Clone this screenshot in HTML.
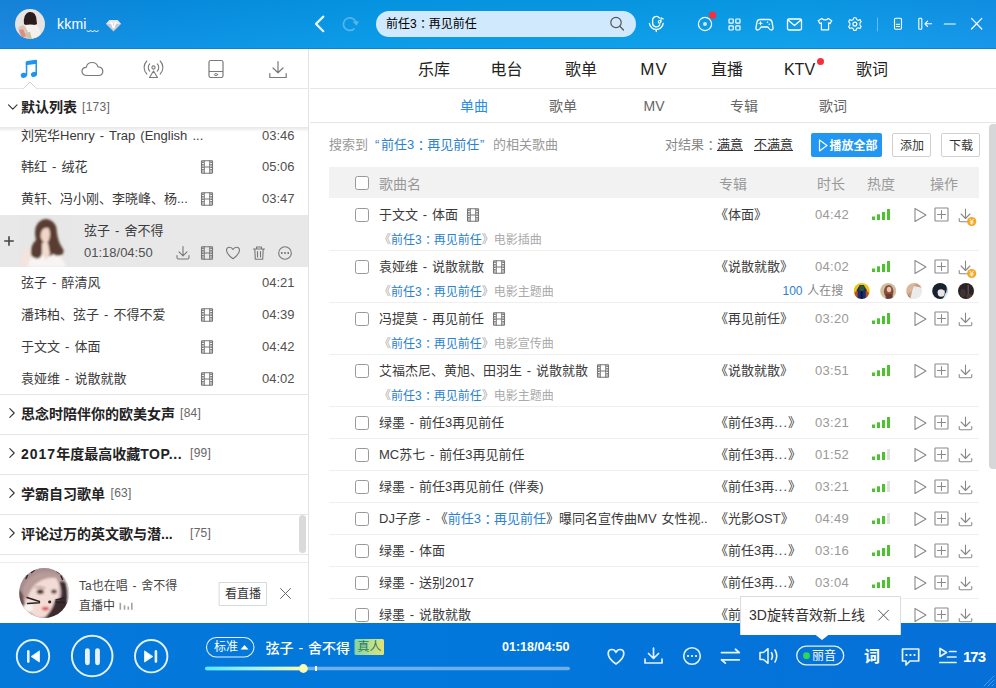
<!DOCTYPE html>
<html lang="zh-CN">
<head>
<meta charset="utf-8">
<title>酷狗音乐</title>
<style>
*{box-sizing:border-box;margin:0;padding:0}
html,body{width:996px;height:688px;overflow:hidden;background:#fff}
body{font-family:"Liberation Sans","Noto Sans CJK SC",sans-serif;font-size:13px;color:#333;position:relative}
.abs{position:absolute}
.t{position:absolute;white-space:nowrap;line-height:20px;height:20px}
svg{position:absolute;overflow:visible}
#top{left:0;top:0;width:996px;height:49px;background:linear-gradient(180deg,rgba(0,0,40,.05),rgba(255,255,255,.03)),linear-gradient(90deg,#1787e0 0%,#0890e4 16%,#059ae8 38%,#0a9eea 80%,#1194ea 100%);border-bottom:1px solid #1a80c8}
#left{left:0;top:49px;width:309px;height:575px;background:#fff;border-right:1px solid #e3e3e3}
#right{left:310px;top:49px;width:686px;height:575px;background:#fff;overflow:hidden}
.hl{position:absolute;height:1px;background:#e6e6e6}
.ls{font-size:13px;color:#3a3a3a;word-spacing:1.500px}
.ld{font-size:13px;color:#505050}
.gh{font-size:14px;font-weight:bold;color:#222}
.gc{font-size:12px;color:#666;letter-spacing:.3px}
.nav{font-size:16px;color:#222;transform:translateX(-50%)}
.sub{font-size:14px;color:#666;transform:translateX(-50%)}
.cb{position:absolute;width:14px;height:14px;border:1px solid #999;border-radius:2.500px;background:#fff}
.sn{font-size:13px;color:#3a3a3a;word-spacing:1.200px}
.al{font-size:13px;color:#3a3a3a}
.al i{font-style:normal;letter-spacing:1px}
.du{font-size:13px;color:#999;letter-spacing:.3px}
.s2{font-size:12px;color:#aaa}
.s2 b{font-weight:normal;color:#2a82d0}
.bl{color:#2a82d0}
.fc{position:relative;left:.27em}
</style>
</head>
<body>
<div id="top" class="abs"></div>
<div id="left" class="abs"></div>
<div id="right" class="abs"></div>
<!--TOP-->
<svg style="left:0;top:0" width="996" height="49" viewBox="0 0 996 49" fill="none" stroke="#fff" stroke-width="1.3" stroke-linecap="round" stroke-linejoin="round">
 <defs><clipPath id="avc"><circle cx="30" cy="24" r="15"/></clipPath><filter id="bl0" x="-10%" y="-10%" width="120%" height="120%"><feGaussianBlur stdDeviation=".6"/></filter></defs>
 <g stroke="none" clip-path="url(#avc)">
  <rect x="14" y="8" width="32" height="32" fill="#e7e3e3"/>
  <g filter="url(#bl0)">
  <path d="M24 24 Q23 14 29 12 Q36 11 36.500 20 L37 24 Q34 26 30 25 Q26 26 24 24Z" fill="#2b1c1d"/>
  <path d="M20 40 Q20 28 25 25 Q30 24 36 25 Q41 28 41 40Z" fill="#f3f0ee"/>
  <path d="M18 28 Q21 24 25 26 L32 40 L21 40Z" fill="#e2c4b6"/>
  <path d="M19 30 L23 29 L26 36 L22 38Z" fill="#d58f86"/>
  <path d="M26 33 L30 32 L32 39 L28 40Z" fill="#c9c49a"/>
  </g>
 </g>
 <!-- vip diamond -->
 <g stroke="none" transform="translate(0 1)">
  <path d="M109.500 19 L117.500 19 L121 23 L113.500 30.500 L106 23Z" fill="#c9ccd1"/>
  <path d="M109.500 19 L117.500 19 L121 23 L106 23Z" fill="#e4e6ea"/>
  <path d="M110.300 21 L112.300 21 L113.600 25 L114.900 21 L116.700 21 L114.300 27.500 L112.800 27.500Z" fill="#fff"/>
 </g>
 <!-- back -->
 <path d="M323.300 16.600 L316 23.900 L323.300 31.200" stroke-width="2.200" stroke="#e2f2fd"/>
 <!-- refresh (dim) -->
 <g opacity=".3"><path d="M355.96 22.79 A6.3 6.3 0 1 0 354.02 28.78" stroke-width="1.700"/><path d="M352.66 21.59 L359.06 21.19 L356.56 25.69Z" fill="#fff" stroke="none"/></g>
 <!-- search box -->
 <rect x="376" y="11" width="260" height="26" rx="13" fill="#d0e9fc" stroke="none"/>
 <g stroke="#555" stroke-width="1.200"><circle cx="616" cy="22.500" r="5.200"/><path d="M620 26.500 L623.500 30"/></g>
 <!-- mic -->
 <g stroke-width="1.300"><path d="M659.300 18 A3.700 3.700 0 0 0 652.600 20 L652.600 23 A3.800 3.800 0 0 0 659.800 24.800"/><path d="M649.400 23.300 A6.950 6.950 0 0 0 663.200 23.300"/><path d="M656.300 30.300 L656.300 31.500"/><circle cx="659.600" cy="21.800" r="1.300" stroke-width="1.100"/><path d="M661 21.500 L661 17.800 L663.300 19" stroke-width="1.100"/></g>
 <!-- disc -->
 <circle cx="705" cy="24" r="6.600" stroke-width="1.200"/><circle cx="705" cy="24" r="2" fill="#cfe8fb" stroke="none"/>
 <circle cx="712.700" cy="15.200" r="3.600" fill="#f5303a" stroke="none"/>
 <!-- grid -->
 <g stroke-width="1.200"><rect x="729" y="19" width="4.200" height="4.200" rx=".8"/><rect x="735.800" y="19" width="4.200" height="4.200" rx=".8"/><rect x="729" y="25.800" width="4.200" height="4.200" rx=".8"/><rect x="735.800" y="25.800" width="4.200" height="4.200" rx=".8"/></g>
 <!-- gamepad -->
 <path d="M760 19.500 L769 19.500 Q771.500 19.500 772 22 L773 27.500 Q773.300 30 771.300 30 Q770 30 769 28.500 L768 27 L761 27 L760 28.500 Q759 30 757.700 30 Q755.700 30 756 27.500 L757 22 Q757.500 19.500 760 19.500Z"/>
 <path d="M760.500 21.800 L760.500 24.800 M759 23.300 L762 23.300" stroke-width="1.100"/><circle cx="767.500" cy="22.300" r=".8" fill="#fff" stroke="none"/><circle cx="769.300" cy="24.200" r=".8" fill="#fff" stroke="none"/>
 <!-- mail -->
 <rect x="787.500" y="19" width="14" height="11" rx="1.500"/><path d="M788 20 L794.500 25.500 L801 20"/>
 <!-- shirt -->
 <path d="M821.800 18.500 Q825 21.300 828.200 18.500 L831.800 20.800 L830 23.600 L828.600 22.800 L828.600 29.800 L821.400 29.800 L821.400 22.800 L820 23.600 L818.200 20.800Z" stroke-width="1.200"/>
 <!-- gear -->
 <g transform="translate(854.900 24.100) scale(.9)"><circle r="2.200"/><path d="M-1.300 -7 L1.300 -7 L1.900 -5 L3.800 -4.100 L5.700 -5 L7 -2.700 L5.600 -1.200 L5.600 1.200 L7 2.700 L5.700 5 L3.800 4.100 L1.900 5 L1.300 7 L-1.300 7 L-1.900 5 L-3.800 4.100 L-5.700 5 L-7 2.700 L-5.600 1.200 L-5.600 -1.200 L-7 -2.700 L-5.700 -5 L-3.800 -4.100 L-1.900 -5Z" stroke-width="1.200"/></g>
 <!-- separator -->
 <path d="M877.500 18 L877.500 31" stroke="#6cb8f3" stroke-width="1"/>
 <!-- phone -->
 <rect x="894.500" y="18.300" width="7" height="11" rx="1.200" stroke-width="1.100"/><path d="M896.300 24.300 L899.700 24.300 M896.300 26.500 L899.700 26.500" stroke-width="1"/>
 <!-- collapse -->
 <rect x="918.800" y="18.300" width="3" height="11" rx=".8" stroke-width="1.100"/><path d="M925 23.800 L931.600 23.800 M927.600 21.100 L924.900 23.800 L927.600 26.500" stroke-width="1.100"/>
 <!-- minimize -->
 <path d="M944.300 24 L955.300 24" stroke-width="1.200"/>
 <!-- close -->
 <path d="M971.500 18.400 L981.800 29 M981.800 18.400 L971.500 29" stroke-width="1.200"/>
</svg>
<div class="t" style="left:57px;top:14px;font-size:14px;color:#fff;letter-spacing:.2px">kkmi<span style="font-size:12px;letter-spacing:0;position:relative;top:2px">﹏</span></div>
<div class="t" style="left:386px;top:14px;font-size:12px;color:#000">前任3<span class="fc">：</span>再见前任</div>
<!--LEFT-->
<div class="hl" style="left:0;top:88px;width:309px"></div>
<svg style="left:0;top:48px" width="309" height="575" viewBox="0 48 309 575" fill="none" stroke="#7a7a7a" stroke-width="1.200" stroke-linecap="round" stroke-linejoin="round">
 <!-- caret under active tab -->
 <path d="M23.500 88.500 L30 82 L36.500 88.500" stroke="#cfcfcf" stroke-width="1" fill="#fff"/>
 <path d="M24.500 88.500 L35.500 88.500" stroke="#fff" stroke-width="1.500"/>
 <!-- music note -->
 <g stroke="none" fill="#1f95ef">
  <path d="M25.800 62.300 Q25.800 61.100 27 60.900 L35.600 59.700 Q37 59.500 37 60.900 L37 63.700 L27.300 65.100 L25.800 65.100Z"/>
  <rect x="25.800" y="62" width="1.500" height="13.500"/><rect x="35.500" y="60.500" width="1.500" height="14"/>
  <ellipse cx="23.800" cy="75.300" rx="3.100" ry="2.550" transform="rotate(-15 23.800 75.300)"/>
  <ellipse cx="34" cy="74.400" rx="3.100" ry="2.550" transform="rotate(-15 34 74.400)"/>
 </g>
 <!-- cloud -->
 <path d="M87 75.500 Q82 75.500 82 71.300 Q82 67.500 86.200 67.300 Q87.300 62.500 92.200 62.500 Q96.800 62.500 98 66.800 Q102.800 67 102.800 71.300 Q102.800 75.500 98.500 75.500Z"/>
 <!-- tower -->
 <g stroke-width="1.100"><circle cx="153.500" cy="67.500" r="1.600"/><path d="M153.500 71 L149.500 77.500 L157.500 77.500Z"/>
 <path d="M149.800 63.800 A5.200 5.200 0 0 0 149.800 71.200"/><path d="M157.200 63.800 A5.200 5.200 0 0 1 157.200 71.200"/>
 <path d="M146.800 61 A9.200 9.200 0 0 0 146.800 74"/><path d="M160.200 61 A9.200 9.200 0 0 1 160.200 74"/></g>
 <!-- device -->
 <rect x="209" y="60.500" width="14" height="17" rx="1.800"/><path d="M209.500 71.500 L222.500 71.500"/><ellipse cx="216" cy="74.600" rx="1.700" ry="1" stroke-width="1"/>
 <!-- download -->
 <path d="M278 61.500 L278 72.500 M273 68 L278 72.800 L283 68 M269.800 73.500 L269.800 77.500 L286.200 77.500 L286.200 73.500"/>
 <!-- chevron open -->
 <path d="M8.500 104.800 L12.800 109.200 L17 104.800" stroke="#333" stroke-width="1.100"/>
</svg>
<div class="t" style="left:21px;top:97px;font-size:14px;font-weight:bold;color:#222">默认列表</div>
<div class="t gc" style="left:82px;top:97px">[173]</div>
<div class="abs" style="left:0;top:127px;width:308px;height:5px;background:linear-gradient(180deg,rgba(0,0,0,.10),rgba(0,0,0,0))"></div>
<!-- songs -->
<div class="t ls" style="left:21px;top:126px">刘宪华Henry - Trap (English ...</div><div class="t ld" style="left:262px;top:126px">03:46</div>
<div class="t ls" style="left:21px;top:157px">韩红 - 绒花</div><div class="t ld" style="left:262px;top:157px">05:06</div>
<div class="t ls" style="left:21px;top:189px">黄轩、冯小刚、李晓峰、杨...</div><div class="t ld" style="left:262px;top:189px">03:47</div>
<div class="abs" style="left:0;top:215px;width:308px;height:52px;background:#e8e8e8"></div>
<div class="t ls" style="left:84px;top:221px">弦子 - 舍不得</div>
<div class="t ld" style="left:84px;top:243px">01:18/04:50</div>
<div class="t ls" style="left:21px;top:273px">弦子 - 醉清风</div><div class="t ld" style="left:262px;top:273px">04:21</div>
<div class="t ls" style="left:21px;top:305px">潘玮柏、弦子 - 不得不爱</div><div class="t ld" style="left:262px;top:305px">04:39</div>
<div class="t ls" style="left:21px;top:337px">于文文 - 体面</div><div class="t ld" style="left:262px;top:337px">04:42</div>
<div class="t ls" style="left:21px;top:369px">袁娅维 - 说散就散</div><div class="t ld" style="left:262px;top:369px">04:02</div>
<!-- groups -->
<div class="hl" style="left:0;top:394px;width:308px"></div>
<div class="t gh" style="left:21px;top:404px">思念时陪伴你的欧美女声</div><div class="t gc" style="left:180px;top:403px">[84]</div>
<div class="hl" style="left:0;top:434px;width:308px"></div>
<div class="t gh" style="left:21px;top:444px"><span style="letter-spacing:1px">2017</span>年度最高收藏<span style="letter-spacing:.6px">TOP...</span></div><div class="t gc" style="left:190px;top:443px">[99]</div>
<div class="hl" style="left:0;top:474px;width:308px"></div>
<div class="t gh" style="left:21px;top:484px">学霸自习歌单</div><div class="t gc" style="left:110.500px;top:483px">[63]</div>
<div class="hl" style="left:0;top:514px;width:308px"></div>
<div class="t gh" style="left:21px;top:524px">评论过万的英文歌与潜...</div><div class="t gc" style="left:190px;top:523px">[75]</div>
<div class="hl" style="left:0;top:554px;width:308px"></div>
<div class="hl" style="left:0;top:562px;width:308px;background:#ececec"></div>
<div class="abs" style="left:299px;top:515px;width:7px;height:38px;border-radius:4px;background:#dadada"></div>
<svg style="left:0;top:120px" width="309" height="503" viewBox="0 120 309 503" fill="none" stroke="#777" stroke-width="1.100" stroke-linecap="round" stroke-linejoin="round">
 <defs>
  <g id="film"><rect x="-5.500" y="-6.300" width="11" height="12.600" rx=".5"/><path d="M-2.700 -6.300 L-2.700 6.300 M2.700 -6.300 L2.700 6.300 M-2.700 0 L2.700 0" stroke-width="1"/><path d="M-4.100 -5.600 L-4.100 5.600 M4.100 -5.600 L4.100 5.600" stroke-width="1.700" stroke-dasharray="1.500 1.050" stroke-linecap="butt"/></g>
  <path id="chev" d="M-2.200 -4.300 L2.200 0 L-2.200 4.300" stroke="#333" stroke-width="1.100"/>
 </defs>
 <use href="#film" x="207" y="167"/><use href="#film" x="207" y="199"/><use href="#film" x="207" y="253"/>
 <use href="#film" x="207" y="315"/><use href="#film" x="207" y="347"/><use href="#film" x="207" y="379"/>
 <use href="#chev" x="12" y="413"/><use href="#chev" x="12" y="453"/><use href="#chev" x="12" y="493"/><use href="#chev" x="12" y="533"/>
 <!-- playing row art -->
 <defs><filter id="bl2" x="-10%" y="-10%" width="120%" height="120%"><feGaussianBlur stdDeviation=".8"/></filter><clipPath id="artc"><rect x="19" y="215" width="52" height="52"/></clipPath></defs>
 <g stroke="none" clip-path="url(#artc)">
  <rect x="19" y="215" width="52" height="52" fill="#e6e7e6"/>
  <g filter="url(#bl2)">
  <path d="M21 267 Q20 255 24 250 Q27 246 30 249 L33 267Z" fill="#f3e4dc"/>
  <path d="M28 267 Q29 256 36 253 L54 253 Q63 256 66 267Z" fill="#f7f4f3"/>
  <path d="M36 240 Q33 228 39 222 Q44 217 50 220 Q57 223 57 233 Q58 242 63 249 Q65 253 61 255 Q56 257 53 254 Q50 258 46 254 L42 254 Q40 260 35 258 Q30 257 31 251 Q31 245 36 240Z" fill="#5a3c30"/>
  <path d="M40 233 Q40 226 45 226 Q50 227 50 234 Q50 241 46 244 Q41 242 40 233Z" fill="#f1d5c6"/>
  <path d="M42 243 L48 243 L50 254 L42 254Z" fill="#f3dccf"/>
  <path d="M39 234 Q39 225 45 224.500 Q48 224.500 50 228 Q46 227 43 229 Q41 231 40.500 236Z" fill="#5a3c30"/>
  <path d="M43 254 L46 260 L50 254Z" fill="#efd8cc"/>
  </g>
 </g>
 <path d="M4.200 241 L13.800 241 M9 236.200 L9 245.800" stroke="#444" stroke-width="1.600" stroke-linecap="butt"/>
 <!-- playing row icons -->
 <path d="M183 246.500 L183 255.500 M179 251.800 L183 255.800 L187 251.800 M177 255.500 L177 257.500 Q177 259 178.500 259 L187.500 259 Q189 259 189 257.500 L189 255.500"/>
 <path d="M233 258.800 Q226.500 254 226.500 250.300 Q226.500 247.200 229.500 247.200 Q231.800 247.200 233 249.500 Q234.200 247.200 236.500 247.200 Q239.500 247.200 239.500 250.300 Q239.500 254 233 258.800Z"/>
 <path d="M253.500 249 L264.500 249 M256.500 249 L256.500 247 L261.500 247 L261.500 249 M254.800 249 L255.300 259.300 L262.700 259.300 L263.200 249 M257.500 251.500 L257.500 257 M260.500 251.500 L260.500 257"/>
 <circle cx="285" cy="253" r="6.300"/><g fill="#666" stroke="none"><circle cx="281.800" cy="253" r=".9"/><circle cx="285" cy="253" r=".9"/><circle cx="288.200" cy="253" r=".9"/></g>
 <!-- promo -->
 <defs><clipPath id="avp"><circle cx="44.200" cy="593" r="25"/></clipPath><filter id="bl3" x="-10%" y="-10%" width="120%" height="120%"><feGaussianBlur stdDeviation="1"/></filter><filter id="bl4" x="-10%" y="-10%" width="120%" height="120%"><feGaussianBlur stdDeviation=".5"/></filter></defs>
 <g stroke="none" clip-path="url(#avp)">
  <rect x="18" y="567" width="53" height="53" fill="#b49a98"/>
  <g filter="url(#bl3)">
  <path d="M18 567 L71 567 L71 584 Q58 570 44 572 Q30 572 22 592 L18 600Z" fill="#a78e8f"/>
  <path d="M24 600 Q22 582 34 577 Q44 572 56 578 Q61 584 59 598 Q56 612 46 617 Q36 620 30 612 Q25 607 24 600Z" fill="#f4dcd6"/>
  <path d="M22 596 Q24 578 38 574 Q48 572 58 578 Q50 577 42 580 Q30 586 27 600Z" fill="#b89c9a"/>
  <path d="M59 582 Q63 590 61 598 L55 600 Q52 612 42 620 L71 620 L71 582Z" fill="#3b2a2e"/>
  <path d="M64.500 578 Q69 588 67.500 603 L72 603 L72 578Z" fill="#f6f3f2"/>
  <path d="M18 590 Q22 590 24 598 Q25 606 29 612 L18 616Z" fill="#6b4f4f"/>
  <ellipse cx="28" cy="608" rx="5" ry="4.500" fill="#f8f4f2"/>
  <ellipse cx="40.300" cy="591.800" rx="3.600" ry="2.500" fill="#4a3436"/><ellipse cx="54" cy="591.500" rx="2.800" ry="2.100" fill="#4a3436"/>
  <path d="M35 587.500 Q40 585.500 45 588" stroke="#8a6a66" stroke-width="1" fill="none"/>
  <ellipse cx="45.400" cy="608.600" rx="3.600" ry="1.900" fill="#e2434f"/>
  </g>
  <g filter="url(#bl4)">
  <ellipse cx="49.700" cy="602" rx="1.600" ry="1.400" fill="#2d2024"/>
  <path d="M27 597.500 L39.500 601.500 M27.500 603.500 L39.500 602.800 M56 600 L64 598 M56 602 L64.500 602.500" stroke="#2b2023" stroke-width="1.400" fill="none"/>
  <path d="M31.500 572.500 L34.500 570 M26 578.500 L27.500 575.500 M57 571.500 L60 573.500 M61 576 L62.500 579.500" stroke="#2b2023" stroke-width="1.400" fill="none"/>
  </g>
 </g>
 <rect x="219.500" y="582.500" width="47" height="23" fill="#fff" stroke="#d9d9d9" stroke-width="1"/>
 <path d="M280.500 588.500 L290.500 598.500 M290.500 588.500 L280.500 598.500" stroke="#666" stroke-width="1"/>
 <g stroke="#a2a2a2" stroke-width="1.600" stroke-linecap="butt"><path d="M120.300 602.800 L120.300 609.800 M124.500 605.300 L124.500 609.800 M128.300 606.600 L128.300 609.800 M131.800 602.800 L131.800 609.800"/></g>
</svg>
<div class="t" style="left:79px;top:576px;font-size:12px;color:#444;word-spacing:1.500px">Ta也在唱 - 舍不得</div>
<div class="t" style="left:79px;top:596px;font-size:12px;color:#444">直播中</div>
<div class="t" style="left:225px;top:584px;font-size:12px;color:#333">看直播</div>
<!--RIGHT-->
<div class="t nav" style="left:434px;top:60px">乐库</div>
<div class="t nav" style="left:506.5px;top:60px">电台</div>
<div class="t nav" style="left:581px;top:60px">歌单</div>
<div class="t nav" style="left:653.5px;top:60px"><span style="letter-spacing:1px;font-size:17px;margin-right:-1px">MV</span></div>
<div class="t nav" style="left:727px;top:60px">直播</div>
<div class="t nav" style="left:799.5px;top:60px">KTV</div>
<div class="t nav" style="left:872px;top:60px">歌词</div>
<div class="abs" style="left:817.200px;top:57.500px;width:7px;height:7px;border-radius:3.500px;background:#f5303a"></div>
<div class="hl" style="left:310px;top:88px;width:686px"></div>
<div class="t sub" style="left:474px;top:96px;color:#2a8de4">单曲</div>
<div class="t sub" style="left:563px;top:96px">歌单</div>
<div class="t sub" style="left:654px;top:96px">MV</div>
<div class="t sub" style="left:744px;top:96px">专辑</div>
<div class="t sub" style="left:833px;top:96px">歌词</div>
<div class="hl" style="left:310px;top:122px;width:686px"></div>
<div class="abs" style="left:989px;top:124px;width:7px;height:345px;border-radius:4px 0 0 4px;background:#d6d7d9"></div>
<div class="t" style="left:329px;top:135px;font-size:13px;color:#999">搜索到</div>
<div class="t bl" style="left:375px;top:135px;font-size:13px">“</div>
<div class="t bl" style="left:381px;top:135px;font-size:13px">前任3<span class="fc">：</span>再见前任</div>
<div class="t bl" style="left:480px;top:135px;font-size:13px">”</div>
<div class="t" style="left:493px;top:135px;font-size:13px;color:#999">的相关歌曲</div>
<div class="t" style="left:665px;top:135px;font-size:13px;color:#888">对结果<span class="fc">：</span></div>
<div class="t" style="left:717px;top:135px;font-size:13px;color:#333;text-decoration:underline">满意</div>
<div class="t" style="left:754px;top:135px;font-size:13px;color:#333;text-decoration:underline">不满意</div>
<div class="abs" style="left:811px;top:133px;width:71px;height:24px;background:#2196f3;border-radius:2px"></div>
<div class="t" style="left:829.500px;top:135.500px;font-size:12px;color:#fff;font-weight:bold">播放全部</div>
<div class="abs" style="left:892px;top:133px;width:39px;height:24px;border:1px solid #d0d0d0;border-radius:2px;background:#fff"></div>
<div class="t" style="left:900px;top:135.500px;font-size:12px;color:#333">添加</div>
<div class="abs" style="left:941px;top:133px;width:39px;height:24px;border:1px solid #d0d0d0;border-radius:2px;background:#fff"></div>
<div class="t" style="left:949px;top:135.500px;font-size:12px;color:#333">下载</div>
<div class="abs" style="left:329px;top:167px;width:650px;height:31px;background:#f2f2f2"></div>
<div class="cb" style="left:355px;top:176px"></div>
<div class="t" style="left:379px;top:174px;font-size:14px;color:#999">歌曲名</div>
<div class="t" style="left:719px;top:174px;font-size:14px;color:#999">专辑</div>
<div class="t" style="left:817px;top:174px;font-size:14px;color:#999">时长</div>
<div class="t" style="left:867px;top:174px;font-size:14px;color:#999">热度</div>
<div class="t" style="left:930px;top:174px;font-size:14px;color:#999">操作</div>
<div class="cb" style="left:355px;top:208px"></div>
<div class="t sn" style="left:379px;top:205px" id="n0">于文文 - 体面</div>
<div class="t s2" style="left:379px;top:230px">《<b>前任3<span class="fc">：</span>再见前任</b>》电影插曲</div>
<div class="hl" style="left:329px;top:250px;width:650px;background:#efefef"></div>
<div class="t al" style="left:715px;top:205px">《体面》</div>
<div class="t du" style="left:815px;top:205px">04:42</div>
<div class="cb" style="left:355px;top:260px"></div>
<div class="t sn" style="left:379px;top:257px" id="n1">袁娅维 - 说散就散</div>
<div class="t s2" style="left:379px;top:282px">《<b>前任3<span class="fc">：</span>再见前任</b>》电影主题曲</div>
<div class="hl" style="left:329px;top:302px;width:650px;background:#efefef"></div>
<div class="t al" style="left:715px;top:257px">《说散就散》</div>
<div class="t du" style="left:815px;top:257px">04:02</div>
<div class="cb" style="left:355px;top:312px"></div>
<div class="t sn" style="left:379px;top:309px" id="n2">冯提莫 - 再见前任</div>
<div class="t s2" style="left:379px;top:334px">《<b>前任3<span class="fc">：</span>再见前任</b>》电影宣传曲</div>
<div class="hl" style="left:329px;top:354px;width:650px;background:#efefef"></div>
<div class="t al" style="left:715px;top:309px">《再见前任》</div>
<div class="t du" style="left:815px;top:309px">03:20</div>
<div class="cb" style="left:355px;top:364px"></div>
<div class="t sn" style="left:379px;top:361px" id="n3">艾福杰尼、黄旭、田羽生 - 说散就散</div>
<div class="t s2" style="left:379px;top:386px">《<b>前任3<span class="fc">：</span>再见前任</b>》电影主题曲</div>
<div class="hl" style="left:329px;top:406px;width:650px;background:#efefef"></div>
<div class="t al" style="left:715px;top:361px">《说散就散》</div>
<div class="t du" style="left:815px;top:361px">03:51</div>
<div class="cb" style="left:355px;top:416px"></div>
<div class="t sn" style="left:379px;top:413px" id="n4">绿墨 - 前任3再见前任</div>
<div class="hl" style="left:329px;top:438px;width:650px;background:#efefef"></div>
<div class="t al" style="left:715px;top:413px">《前任3再<i>...</i>》</div>
<div class="t du" style="left:815px;top:413px">03:21</div>
<div class="cb" style="left:355px;top:448px"></div>
<div class="t sn" style="left:379px;top:445px" id="n5">MC苏七 - 前任3再见前任</div>
<div class="hl" style="left:329px;top:470px;width:650px;background:#efefef"></div>
<div class="t al" style="left:715px;top:445px">《前任3再<i>...</i>》</div>
<div class="t du" style="left:815px;top:445px">01:52</div>
<div class="cb" style="left:355px;top:480px"></div>
<div class="t sn" style="left:379px;top:477px" id="n6">绿墨 - 前任3再见前任 (伴奏)</div>
<div class="hl" style="left:329px;top:502px;width:650px;background:#efefef"></div>
<div class="t al" style="left:715px;top:477px">《前任3再<i>...</i>》</div>
<div class="t du" style="left:815px;top:477px">03:21</div>
<div class="cb" style="left:355px;top:512px"></div>
<div class="t sn" style="left:379px;top:509px" id="n7">DJ子彦 - 《<span class="bl">前任3<span class="fc">：</span>再见前任</span>》曝同名宣传曲MV 女性视..</div>
<div class="hl" style="left:329px;top:534px;width:650px;background:#efefef"></div>
<div class="t al" style="left:715px;top:509px">《光影OST》</div>
<div class="t du" style="left:815px;top:509px">04:49</div>
<div class="cb" style="left:355px;top:544px"></div>
<div class="t sn" style="left:379px;top:541px" id="n8">绿墨 - 体面</div>
<div class="hl" style="left:329px;top:566px;width:650px;background:#efefef"></div>
<div class="t al" style="left:715px;top:541px">《前任3再<i>...</i>》</div>
<div class="t du" style="left:815px;top:541px">03:16</div>
<div class="cb" style="left:355px;top:576px"></div>
<div class="t sn" style="left:379px;top:573px" id="n9">绿墨 - 送别2017</div>
<div class="hl" style="left:329px;top:598px;width:650px;background:#efefef"></div>
<div class="t al" style="left:715px;top:573px">《前任3再<i>...</i>》</div>
<div class="t du" style="left:815px;top:573px">03:04</div>
<div class="cb" style="left:355px;top:608px"></div>
<div class="t sn" style="left:379px;top:605px" id="n10">绿墨 - 说散就散</div>
<div class="hl" style="left:329px;top:630px;width:650px;background:#efefef"></div>
<div class="t al" style="left:715px;top:605px">《前任3再<i>...</i>》</div>
<div class="t du" style="left:815px;top:605px">03:19</div>
<svg style="left:310px;top:123px" width="686" height="500" viewBox="310 123 686 500" fill="none" stroke="#8a8a8a" stroke-width="1.100" stroke-linecap="round" stroke-linejoin="round">
<defs>
 <path id="rplay" d="M-5 -6.500 L6 0 L-5 6.500Z" stroke-width="1.100"/>
 <g id="radd"><rect x="-6.500" y="-6.500" width="13" height="13" rx=".5"/><path d="M-4 0 L4 0 M0 -4 L0 4"/></g>
 <path id="rdl" d="M0 -6 L0 3.300 M-4.400 -1 L0 3.500 L4.400 -1 M-6.300 3.500 L-6.300 5.500 Q-6.300 6.700 -5 6.700 L5 6.700 Q6.300 6.700 6.300 5.500 L6.300 3.500"/>
 <path id="rdl2" d="M0 -6 L0 2.500 M-3.300 -.8 L0 2.700 L3.300 -.8 M-5 2.500 L-5 5 L5 5 L5 2.500"/>
 <g id="film2" stroke="#777"><rect x="-5.500" y="-6.300" width="11" height="12.600" rx=".5"/><path d="M-2.700 -6.300 L-2.700 6.300 M2.700 -6.300 L2.700 6.300 M-2.700 0 L2.700 0" stroke-width="1"/><path d="M-4.100 -5.600 L-4.100 5.600 M4.100 -5.600 L4.100 5.600" stroke-width="1.700" stroke-dasharray="1.500 1.050" stroke-linecap="butt"/></g>
</defs>
<path d="M819.500 140 L819.500 151 L827 145.500Z" stroke="#fff" stroke-width="1.200"/>
<rect x="872" y="216.5" width="3" height="3.5" fill="#4cc22f" stroke="none"/>
<rect x="877" y="214.3" width="3" height="5.7" fill="#4cc22f" stroke="none"/>
<rect x="882" y="212.0" width="3" height="8" fill="#4cc22f" stroke="none"/>
<rect x="887" y="209.0" width="3" height="11" fill="#4cc22f" stroke="none"/>
<use href="#rplay" x="920" y="215"/><use href="#radd" x="941.500" y="214.5"/><use href="#rdl" x="965.500" y="215"/>
<circle cx="971.700" cy="221.5" r="4.600" fill="#f5a623" stroke="none"/><path d="M970 219.2 L971.700 221.5 L973.400 219.2 M971.700 221.5 L971.700 224.2 M970.200 221.8 L973.200 221.8 M970.200 223 L973.200 223" stroke="#fff" stroke-width=".8"/>
<rect x="872" y="268.5" width="3" height="3.5" fill="#4cc22f" stroke="none"/>
<rect x="877" y="266.3" width="3" height="5.7" fill="#4cc22f" stroke="none"/>
<rect x="882" y="264.0" width="3" height="8" fill="#4cc22f" stroke="none"/>
<rect x="887" y="261.0" width="3" height="11" fill="#4cc22f" stroke="none"/>
<use href="#rplay" x="920" y="267"/><use href="#radd" x="941.500" y="266.5"/><use href="#rdl" x="965.500" y="267"/>
<circle cx="971.700" cy="273.5" r="4.600" fill="#f5a623" stroke="none"/><path d="M970 271.2 L971.700 273.5 L973.400 271.2 M971.700 273.5 L971.700 276.2 M970.200 273.8 L973.200 273.8 M970.200 275 L973.200 275" stroke="#fff" stroke-width=".8"/>
<rect x="872" y="320.5" width="3" height="3.5" fill="#4cc22f" stroke="none"/>
<rect x="877" y="318.3" width="3" height="5.7" fill="#4cc22f" stroke="none"/>
<rect x="882" y="316.0" width="3" height="8" fill="#4cc22f" stroke="none"/>
<rect x="887" y="313.0" width="3" height="11" fill="#4cc22f" stroke="none"/>
<use href="#rplay" x="920" y="319"/><use href="#radd" x="941.500" y="318.5"/><use href="#rdl" x="965.500" y="319"/>
<rect x="872" y="372.5" width="3" height="3.5" fill="#4cc22f" stroke="none"/>
<rect x="877" y="370.3" width="3" height="5.7" fill="#4cc22f" stroke="none"/>
<rect x="882" y="368.0" width="3" height="8" fill="#4cc22f" stroke="none"/>
<rect x="887" y="365.0" width="3" height="11" fill="#4cc22f" stroke="none"/>
<use href="#rplay" x="920" y="371"/><use href="#radd" x="941.500" y="370.5"/><use href="#rdl" x="965.500" y="371"/>
<rect x="872" y="424.5" width="3" height="3.5" fill="#4cc22f" stroke="none"/>
<rect x="877" y="422.3" width="3" height="5.7" fill="#4cc22f" stroke="none"/>
<rect x="882" y="420.0" width="3" height="8" fill="#4cc22f" stroke="none"/>
<rect x="887" y="417.0" width="3" height="11" fill="#4cc22f" stroke="none"/>
<use href="#rplay" x="920" y="423"/><use href="#radd" x="941.500" y="422.5"/><use href="#rdl" x="965.500" y="423"/>
<rect x="872" y="456.5" width="3" height="3.5" fill="#4cc22f" stroke="none"/>
<rect x="877" y="454.3" width="3" height="5.7" fill="#4cc22f" stroke="none"/>
<rect x="882" y="452.0" width="3" height="8" fill="#4cc22f" stroke="none"/>
<rect x="887" y="449.0" width="3" height="11" fill="#e0e0e0" stroke="none"/>
<use href="#rplay" x="920" y="455"/><use href="#radd" x="941.500" y="454.5"/><use href="#rdl" x="965.500" y="455"/>
<rect x="872" y="488.5" width="3" height="3.5" fill="#4cc22f" stroke="none"/>
<rect x="877" y="486.3" width="3" height="5.7" fill="#4cc22f" stroke="none"/>
<rect x="882" y="484.0" width="3" height="8" fill="#4cc22f" stroke="none"/>
<rect x="887" y="481.0" width="3" height="11" fill="#e0e0e0" stroke="none"/>
<use href="#rplay" x="920" y="487"/><use href="#radd" x="941.500" y="486.5"/><use href="#rdl" x="965.500" y="487"/>
<rect x="872" y="520.5" width="3" height="3.5" fill="#4cc22f" stroke="none"/>
<rect x="877" y="518.3" width="3" height="5.7" fill="#4cc22f" stroke="none"/>
<rect x="882" y="516.0" width="3" height="8" fill="#4cc22f" stroke="none"/>
<rect x="887" y="513.0" width="3" height="11" fill="#e0e0e0" stroke="none"/>
<use href="#rplay" x="920" y="519"/><use href="#radd" x="941.500" y="518.5"/><use href="#rdl" x="965.500" y="519"/>
<rect x="872" y="552.5" width="3" height="3.5" fill="#4cc22f" stroke="none"/>
<rect x="877" y="550.3" width="3" height="5.7" fill="#4cc22f" stroke="none"/>
<rect x="882" y="548.0" width="3" height="8" fill="#4cc22f" stroke="none"/>
<rect x="887" y="545.0" width="3" height="11" fill="#4cc22f" stroke="none"/>
<use href="#rplay" x="920" y="551"/><use href="#radd" x="941.500" y="550.5"/><use href="#rdl" x="965.500" y="551"/>
<rect x="872" y="584.5" width="3" height="3.5" fill="#4cc22f" stroke="none"/>
<rect x="877" y="582.3" width="3" height="5.7" fill="#4cc22f" stroke="none"/>
<rect x="882" y="580.0" width="3" height="8" fill="#4cc22f" stroke="none"/>
<rect x="887" y="577.0" width="3" height="11" fill="#4cc22f" stroke="none"/>
<use href="#rplay" x="920" y="583"/><use href="#radd" x="941.500" y="582.5"/><use href="#rdl" x="965.500" y="583"/>
<rect x="872" y="616.5" width="3" height="3.5" fill="#4cc22f" stroke="none"/>
<rect x="877" y="614.3" width="3" height="5.7" fill="#4cc22f" stroke="none"/>
<rect x="882" y="612.0" width="3" height="8" fill="#4cc22f" stroke="none"/>
<rect x="887" y="609.0" width="3" height="11" fill="#4cc22f" stroke="none"/>
<use href="#rplay" x="920" y="615"/><use href="#radd" x="941.500" y="614.5"/><use href="#rdl" x="965.500" y="615"/>
<use href="#film2" x="473" y="215"/>
<use href="#film2" x="499" y="267"/>
<use href="#film2" x="499" y="319"/>
<use href="#film2" x="603" y="371"/>
<defs><filter id="bl1" x="-10%" y="-10%" width="120%" height="120%"><feGaussianBlur stdDeviation=".7"/></filter>
<clipPath id="ac0"><circle cx="861.7" cy="291" r="8"/></clipPath>
<clipPath id="ac1"><circle cx="888.2" cy="291" r="8"/></clipPath>
<clipPath id="ac2"><circle cx="914.2" cy="291" r="8"/></clipPath>
<clipPath id="ac3"><circle cx="940.2" cy="291" r="8"/></clipPath>
<clipPath id="ac4"><circle cx="966" cy="291" r="8"/></clipPath>
</defs>
<g clip-path="url(#ac0)" stroke="none"><g filter="url(#bl1)"><rect x="852.7" y="282" width="18" height="18" fill="#efc50a"/><path d="M855.7 300 L856.7 290 L859.7 285 L863.7 285 L866.7 290 L867.7 300Z" fill="#1f2f6a"/><ellipse cx="861.7" cy="288.500" rx="2.500" ry="3" fill="#2b5a3a"/><path d="M854.7 292 L857.7 291 L857.7 297 L854.7 298Z" fill="#c04a28"/><path d="M868.7 292 L865.7 291 L865.7 297 L868.7 298Z" fill="#c04a28"/><rect x="860.7" y="291" width="2" height="8" fill="#10183a"/></g></g>
<g clip-path="url(#ac1)" stroke="none"><g filter="url(#bl1)"><rect x="879.2" y="282" width="18" height="18" fill="#cdbf9f"/><ellipse cx="888.7" cy="291.500" rx="4.800" ry="6.500" fill="#8a4e3c"/><ellipse cx="889.0" cy="289.500" rx="2.200" ry="2.800" fill="#e8c4ae"/><path d="M885.2 300 L886.2 294 L892.2 294 L893.2 300Z" fill="#6a3a30"/></g></g>
<g clip-path="url(#ac2)" stroke="none"><g filter="url(#bl1)"><rect x="905.2" y="282" width="18" height="18" fill="#c9a083"/><path d="M910.2 300 L913.2 286 L923.2 288 L923.2 300Z" fill="#ecebeb"/><path d="M905.2 282 L916.2 282 L911.2 292 L905.2 294Z" fill="#d9b79c"/><path d="M906.2 300 L908.2 295 L912.2 300Z" fill="#8a6a55"/></g></g>
<g clip-path="url(#ac3)" stroke="none"><g filter="url(#bl1)"><rect x="931.2" y="282" width="18" height="18" fill="#b9cfe0"/><path d="M931.2 300 L932.2 288 Q936.2 281 943.2 283 Q948.2 285 946.2 292 L942.2 300Z" fill="#18222f"/><ellipse cx="941.2" cy="292.500" rx="3.600" ry="4.200" fill="#ece4e2"/><path d="M936.2 289 Q940.2 285 945.2 289 L944.2 290.500 Q940.2 288 937.2 291Z" fill="#18222f"/><path d="M945.2 294 L949.2 291 L949.2 300 L944.2 300Z" fill="#dfe6ee"/></g></g>
<g clip-path="url(#ac4)" stroke="none"><g filter="url(#bl1)"><rect x="957" y="282" width="18" height="18" fill="#2a2126"/><ellipse cx="963" cy="293" rx="3" ry="4" fill="#3f3234"/><rect x="967.5" y="285" width="1.600" height="11" fill="#5b4b48"/><ellipse cx="969" cy="296" rx="3" ry="2" fill="#4a3a36"/></g></g>
</svg>
<div class="t" style="left:782.500px;top:281px;font-size:12px;color:#888;word-spacing:1.500px"><span class="bl">100</span> 人在搜</div>
<!--BOTTOM-->
<div class="abs" style="left:0;top:623px;width:996px;height:65px;background:linear-gradient(90deg,#0479da 0%,#0277db 50%,#0670d8 100%);z-index:5"></div>
<div class="abs" style="left:740px;top:595.500px;width:160.500px;height:39.500px;background:#fff;border:1px solid #dcdcdc;border-bottom:none;z-index:6"></div>
<div class="t" style="left:749px;top:604.500px;font-size:14px;color:#333;z-index:7">3D旋转音效新上线</div>
<svg style="left:0;top:590px;z-index:7" width="996" height="98" viewBox="0 590 996 98" fill="none" stroke="#e6f2fd" stroke-width="1.600" stroke-linecap="round" stroke-linejoin="round">
 <defs><linearGradient id="pg" x1="0" x2="1" y1="0" y2="0"><stop offset="0" stop-color="#55eaff"/><stop offset=".55" stop-color="#a8f5e8"/><stop offset="1" stop-color="#fff8a8"/></linearGradient>
 <linearGradient id="zr" x1="0" x2="1" y1="0" y2="0"><stop offset="0" stop-color="#86d3a4"/><stop offset=".6" stop-color="#bfe08c"/><stop offset="1" stop-color="#e3e272"/></linearGradient></defs>
 <!-- tooltip arrow + close -->
 <path d="M815 634.500 L822 640 L829 634.500Z" fill="#fff" stroke="none"/>
 <path d="M878.500 610.200 L888.500 620.200 M888.500 610.200 L878.500 620.200" stroke="#555" stroke-width="1"/>
 <!-- prev -->
 <circle cx="33" cy="656.200" r="16.200" stroke-width="1.900" stroke="#e3f0fc"/>
 <path d="M39.300 651.200 L39.300 661.700 L31.600 656.500Z" fill="#fff" stroke-width="1.200"/><path d="M28.300 651.400 L28.300 661.600" stroke-width="2.600"/>
 <!-- pause -->
 <circle cx="92.200" cy="656" r="20.300" stroke-width="2" stroke="#e3f0fc"/>
 <path d="M87.400 650.600 L87.400 662.800 M97.500 650.600 L97.500 662.800" stroke-width="4.800"/>
 <!-- next -->
 <circle cx="151.200" cy="656.200" r="16.200" stroke-width="1.900" stroke="#e3f0fc"/>
 <path d="M144.700 651.200 L144.700 661.700 L152.400 656.500Z" fill="#fff" stroke-width="1.200"/><path d="M155.900 651.400 L155.900 661.600" stroke-width="2.600"/>
 <!-- quality pill -->
 <rect x="206.500" y="637.500" width="47.500" height="19.500" rx="9.750" stroke-width="1.100"/>
 <path d="M240.500 649.500 L244.500 645 L248.500 649.500Z" fill="#fff" stroke="none"/>
 <!-- zhenren badge -->
 <rect x="354.500" y="639" width="29.500" height="16" rx="1.500" fill="url(#zr)" stroke="none"/>
 <!-- progress -->
 <rect x="205" y="666.700" width="365" height="3.500" rx="1.700" fill="#fff" fill-opacity=".42" stroke="none"/>
 <rect x="205" y="666.700" width="98" height="3.500" rx="1.700" fill="url(#pg)" stroke="none"/>
 <circle cx="303.400" cy="668.500" r="4.400" fill="#fff9b4" stroke="none"/>
 <rect x="315" y="666" width="2" height="5" fill="#fff" stroke="none"/>
 <!-- heart -->
 <path d="M616 664 Q608.200 658.500 608.200 653.700 Q608.200 649.500 612 649.500 Q614.600 649.500 616 652.300 Q617.400 649.500 620 649.500 Q623.800 649.500 623.800 653.700 Q623.800 658.500 616 664Z" stroke-width="1.700"/>
 <!-- download -->
 <path d="M653.500 648 L653.500 658 M648.500 653.500 L653.500 658.500 L658.500 653.500 M645 659 L645 663 L662 663 L662 659" stroke-width="1.700"/>
 <!-- more -->
 <circle cx="692" cy="656" r="8.300" stroke-width="1.600"/><g fill="#fff" stroke="none"><circle cx="688" cy="656" r="1.100"/><circle cx="692" cy="656" r="1.100"/><circle cx="696" cy="656" r="1.100"/></g>
 <!-- loop -->
 <path d="M721.500 652.600 L739.300 652.600 M735.500 649.300 L739.300 652.600 M739.300 659.800 L721.500 659.800 M725.300 663.100 L721.500 659.800" stroke-width="1.800"/>
 <!-- volume -->
 <path d="M760 652.500 L763.500 652.500 L768 648.700 L768 663.300 L763.500 659.500 L760 659.500Z" stroke-width="1.600"/>
 <path d="M771.500 652.700 Q773.500 656 771.500 659.300 M775 650 Q778.500 656 775 662" stroke-width="1.600"/>
 <!-- liyin pill -->
 <rect x="796.700" y="646.200" width="47" height="18.600" rx="9.300" stroke-width="1.300"/>
 <circle cx="806.500" cy="655.700" r="3.400" fill="#2fd94e" stroke="none"/>
 <!-- chat -->
 <path d="M902.500 649 L918.700 649 L918.700 661 L910 661 L906 665 L906 661 L902.500 661Z" stroke-width="1.700"/>
 <g fill="#fff" stroke="none"><circle cx="906.500" cy="655" r="1.100"/><circle cx="910.500" cy="655" r="1.100"/><circle cx="914.500" cy="655" r="1.100"/></g>
 <!-- playlist -->
 <path d="M940 648.500 L940 656.500 L946.500 652.500Z M949.500 651.500 L956 651.500 M947.500 657 L956 657 M939.800 662.500 L956 662.500" stroke-width="1.700"/>
 <!-- grip -->
 <path d="M984 686 L994 676 M988 686 L994 680 M992 686 L994 684" stroke="#4a9be8" stroke-width="1"/>
</svg>
<div class="t" style="left:214px;top:637px;font-size:12px;color:#fff;z-index:7">标准</div>
<div class="t" style="left:265.500px;top:637.500px;font-size:14px;font-weight:500;color:#fff;z-index:7;word-spacing:1px">弦子 - 舍不得</div>
<div class="t" style="left:357.500px;top:637px;font-size:12px;color:#267a66;z-index:7">真人</div>
<div class="t" style="left:502px;top:637px;font-size:12.500px;font-weight:bold;color:#fff;z-index:7">01:18/04:50</div>
<div class="t" style="left:812px;top:646px;font-size:12px;color:#fff;z-index:7">丽音</div>
<div class="t" style="left:864px;top:646.500px;font-size:16px;font-weight:bold;color:#fff;z-index:7">词</div>
<div class="t" style="left:963px;top:646.500px;font-size:15px;font-weight:bold;color:#fff;z-index:7;letter-spacing:-1px">173</div>
</body>
</html>
